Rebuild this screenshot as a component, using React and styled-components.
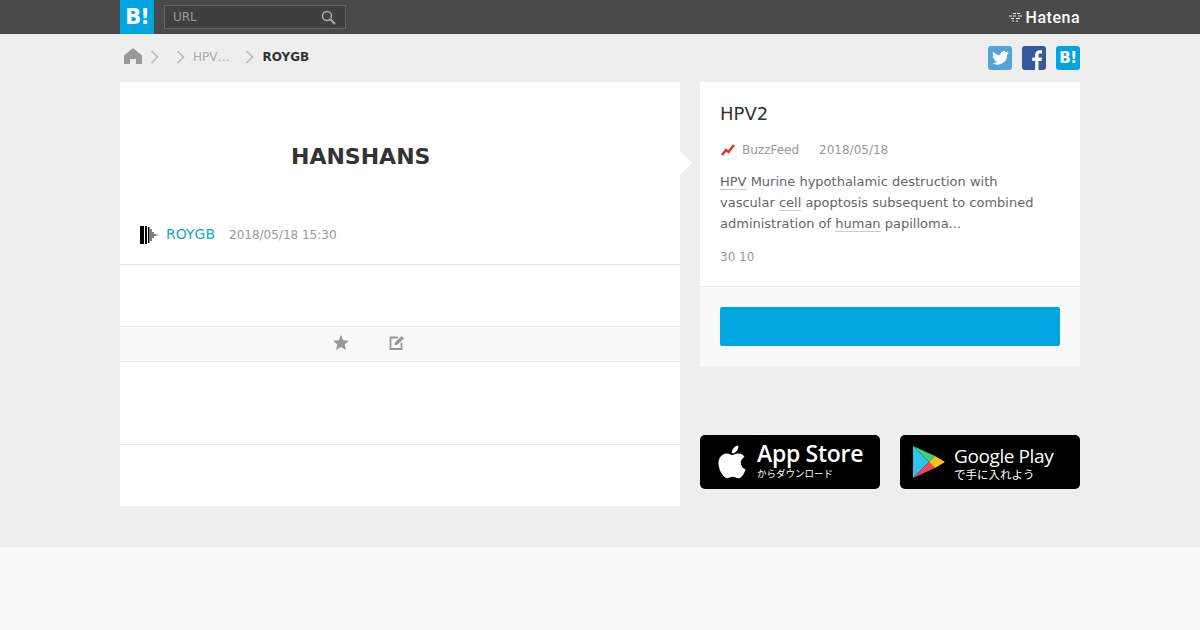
import React from 'react';
import styled, { createGlobalStyle } from 'styled-components';

const Global = createGlobalStyle`
  html, body { margin: 0; padding: 0; }
  body {
    background: #eeeeee;
    font-family: "DejaVu Sans", Verdana, sans-serif;
    color: #333;
    height: 630px;
    overflow: hidden;
  }
`;

const Header = styled.header`
  height: 34px;
  background: #4a4a4a;
`;

const Wrap = styled.div`
  width: 960px;
  margin: 0 auto;
  display: flex;
  align-items: center;
`;

const HeaderInner = styled(Wrap)`
  height: 34px;
`;

const Logo = styled.a`
  width: 34px;
  height: 34px;
  background: #00a4de;
  color: #fff;
  font-size: 21px;
  font-weight: bold;
  letter-spacing: -1px;
  display: flex;
  align-items: center;
  justify-content: center;
`;

const Search = styled.div`
  height: 22px;
  width: 163px;
  margin-left: 10px;
  border: 1px solid #666;
  background: #404040;
  display: flex;
  align-items: center;
  justify-content: space-between;
  padding: 0 9px 0 8px;
  font-size: 12px;
  color: #999;
`;

const Hatena = styled.div`
  margin-left: auto;
  display: flex;
  align-items: center;
  gap: 3px;
  color: #fff;
  font-family: "Roboto", sans-serif;
  font-size: 16px;
  font-weight: 500;
  letter-spacing: 0.5px;
`;

const Crumbs = styled(Wrap)`
  height: 46px;
  margin-bottom: 2px;
  font-size: 12px;
  color: #999;
`;

const Crumb = styled.span`
  display: flex;
  align-items: center;
  font-weight: ${p => (p.$current ? 'bold' : 'normal')};
  color: ${p => (p.$current ? '#333' : '#aaa')};
`;

const HomeIcon = styled.svg`
  margin: 0 0 2px 4px;
`;

const ChevronIcon = styled.svg`
  margin: 0 ${p => p.$mr || 0}px 1px ${p => p.$ml || 0}px;
`;

const Social = styled.div`
  margin-left: auto;
  margin-top: 2px;
  display: flex;
  gap: 10px;
`;

const SocialIcon = styled.a`
  width: 24px;
  height: 24px;
  border-radius: 3px;
  background: ${p => p.$bg};
  color: #fff;
  display: flex;
  align-items: ${p => p.$align || 'center'};
  justify-content: center;
  font-size: 15px;
  font-weight: bold;
  letter-spacing: -0.5px;
  overflow: hidden;
`;

const FacebookF = styled.svg`
  margin-left: 5px;
`;

const Columns = styled.div`
  width: 960px;
  margin: 0 auto;
  display: flex;
  gap: 20px;
  align-items: flex-start;
`;

const Main = styled.main`
  width: 560px;
  height: 424px;
  background: #fff;
  position: relative;
`;

const Pointer = styled.span`
  position: absolute;
  right: -12px;
  top: 69px;
  width: 0;
  height: 0;
  border-style: solid;
  border-width: 12px 0 12px 12px;
  border-color: transparent transparent transparent #fff;
`;

const Title = styled.h1`
  margin: 0;
  padding: 61px 0 0 171px;
  height: 64px;
  font-size: 22px;
  line-height: 28px;
  font-weight: bold;
  color: #333;
`;

const Meta = styled.div`
  height: 56px;
  padding: 0 20px 1px;
  display: flex;
  align-items: center;
  font-size: 12px;
  color: #999;
  border-bottom: 1px solid #e5e5e5;
`;

const UserName = styled.a`
  margin: 0 14px 2px 8px;
  font-size: 14px;
  color: #19a4c4;
`;

const Toolbar = styled.div`
  margin-top: 61px;
  height: 30px;
  padding: 0 0 4px 213px;
  background: #f9f9f9;
  border-top: 1px solid #e8e8e8;
  border-bottom: 1px solid #e8e8e8;
  display: flex;
  align-items: center;
  gap: 40px;
`;

const Divider = styled.div`
  margin-top: 82px;
  border-top: 1px solid #e5e5e5;
`;

const Side = styled.aside`
  width: 380px;
  display: flex;
  flex-direction: column;
`;

const Card = styled.section`
  background: #fff;
`;

const CardBody = styled.div`
  height: 205px;
  padding: 20px 20px 0;
  box-sizing: border-box;
  border-bottom: 1px solid #eeeeee;
`;

const CardTitle = styled.h2`
  margin: 0;
  font-size: 18px;
  line-height: 24px;
  font-weight: normal;
  color: #333;
`;

const Source = styled.div`
  margin-top: 14px;
  display: flex;
  align-items: center;
  font-size: 12px;
  line-height: 20px;
  color: #999;
`;

const SourceName = styled.span`
  margin: 0 20px 0 6px;
`;

const Summary = styled.p`
  margin: 11px 0 0;
  padding-right: 15px;
  font-size: 13px;
  line-height: 21px;
  color: #666;
`;

const Keyword = styled.span`
  border-bottom: 1px solid #ccc;
`;

const Counts = styled.div`
  margin-top: 13px;
  font-size: 12px;
  line-height: 20px;
  color: #999;
`;

const CardFoot = styled.div`
  height: 79px;
  padding: 20px 20px 0;
  box-sizing: border-box;
  background: #f9f9f9;
`;

const BlueButton = styled.a`
  display: block;
  height: 39px;
  border-radius: 2px;
  background: #00a4de;
`;

const Stores = styled.div`
  margin-top: 69px;
  display: flex;
  justify-content: space-between;
`;

const StoreBadge = styled.a`
  width: 180px;
  height: 54px;
  background: #000;
  border-radius: 5px;
  display: flex;
  align-items: center;
  padding-left: ${p => p.$pad}px;
  box-sizing: border-box;
  color: #fff;
`;

const StoreText = styled.div`
  display: flex;
  flex-direction: column;
  margin: ${p => p.$shift}px 0 0 ${p => p.$gap}px;
`;

const StoreName = styled.span`
  font-family: "Open Sans", sans-serif;
  font-size: ${p => p.$size}px;
  line-height: ${p => p.$line}px;
  font-weight: ${p => p.$weight || 400};
  letter-spacing: ${p => p.$track || 0}px;
  white-space: nowrap;
`;

const StoreSub = styled.span`
  font-family: "Noto Sans CJK JP", sans-serif;
  font-size: ${p => p.$size}px;
  line-height: 14px;
  white-space: nowrap;
`;

const Footer = styled.footer`
  margin-top: 41px;
  height: 84px;
  background: #f9f9f9;
`;

const Chevron = ({ ml, mr }) => (
  <ChevronIcon $ml={ml} $mr={mr} width="10" height="14" viewBox="0 0 10 14">
    <path d="M1.5 1l6 6-6 6" fill="none" stroke="#bbb" strokeWidth="1.6" />
  </ChevronIcon>
);

const App = () => (
  <>
    <Global />
    <Header>
      <HeaderInner>
        <Logo>B!</Logo>
        <Search>
          URL
          <svg width="15" height="15" viewBox="0 0 15 15">
            <circle cx="6" cy="6" r="4.5" fill="none" stroke="#aaa" strokeWidth="1.5" />
            <path d="M9.500 9.500l4.500 4.500" stroke="#aaa" strokeWidth="2" />
          </svg>
        </Search>
        <Hatena>
          <svg width="15" height="11" viewBox="0 0 15 11">
            <path d="M5 1.500h3M9 1.500h3M1 4h3M5 4h3M10 4h4M3 6.500h3M8 6.500h4M4 9h2M8 9h2" stroke="#fff" strokeWidth="0.9" fill="none" />
          </svg>
          Hatena
        </Hatena>
      </HeaderInner>
    </Header>
    <Crumbs>
      <HomeIcon width="18" height="16" viewBox="0 0 18 16">
        <path d="M9 0L0 7.500V16h6v-5h6v5h6V7.500z" fill="#999" />
      </HomeIcon>
      <Chevron ml={8} />
      <Chevron ml={16} mr={7} />
      <Crumb>HPV…</Crumb>
      <Chevron ml={16} mr={7} />
      <Crumb $current>ROYGB</Crumb>
      <Social>
        <SocialIcon $bg="#55a4d8">
          <svg width="17" height="14" viewBox="0 0 24 20">
            <path fill="#fff" d="M24 2.400a10 10 0 0 1-2.800.8A5 5 0 0 0 23.300.5a10 10 0 0 1-3.100 1.200 4.900 4.900 0 0 0-8.400 4.500A14 14 0 0 1 1.700.9a4.900 4.900 0 0 0 1.500 6.600 5 5 0 0 1-2.200-.6 4.900 4.900 0 0 0 3.900 4.900 5 5 0 0 1-2.200.1 4.900 4.900 0 0 0 4.600 3.400A9.900 9.900 0 0 1 0 17.300 14 14 0 0 0 21.500 4.900 10 10 0 0 0 24 2.400z" />
          </svg>
        </SocialIcon>
        <SocialIcon $bg="#34589a" $align="flex-end">
          <FacebookF width="12" height="20" viewBox="0 0 12 20">
            <path fill="#fff" d="M7.500 20v-9h3l.5-3.500H7.500V5.300c0-1 .3-1.700 1.700-1.700H11V.5C10.700.4 9.700.3 8.500.3 6 .3 4.200 1.800 4.200 4.800v2.700H1.200V11h3v9z" />
          </FacebookF>
        </SocialIcon>
        <SocialIcon $bg="#00a4de">B!</SocialIcon>
      </Social>
    </Crumbs>
    <Columns>
      <Main>
        <Pointer />
        <Title>HANSHANS</Title>
        <Meta>
          <svg width="18" height="18" viewBox="0 0 18 18">
            <path d="M0 0h4v18H0zM5 0h2v18H5zM8 1h1.500v16H8zM10.500 3h1v12h-1zM12.500 6h1v6h-1zM14.500 8h1v2h-1zM16.500 8.500h1v1h-1z" fill="#000" />
          </svg>
          <UserName>ROYGB</UserName>
          2018/05/18 15:30
        </Meta>
        <Toolbar>
          <svg width="16" height="15" viewBox="0 0 16 15">
            <path d="M8 0l2.300 5.200 5.700.5-4.300 3.700 1.300 5.600L8 12l-5 3 1.300-5.600L0 5.700l5.700-.5z" fill="#999" />
          </svg>
          <svg width="16" height="15" viewBox="0 0 16 15">
            <path d="M9 2.500H1.500v11.500h11V7.500" fill="none" stroke="#999" strokeWidth="1.800" />
            <path d="M5.500 10l.5-2.500L12.500 1 15 3.500 8 10z" fill="#999" />
          </svg>
        </Toolbar>
        <Divider />
      </Main>
      <Side>
        <Card>
          <CardBody>
            <CardTitle>HPV2</CardTitle>
            <Source>
              <svg width="16" height="14" viewBox="0 0 16 14">
                <path d="M2 12l4-5 2.500 2L14 2" fill="none" stroke="#e03a30" strokeWidth="2.600" />
              </svg>
              <SourceName>BuzzFeed</SourceName>
              2018/05/18
            </Source>
            <Summary>
              <Keyword>HPV</Keyword> Murine hypothalamic destruction with vascular <Keyword>cell</Keyword> apoptosis subsequent to combined administration of <Keyword>human</Keyword> papilloma...
            </Summary>
            <Counts>30 10</Counts>
          </CardBody>
          <CardFoot>
            <BlueButton />
          </CardFoot>
        </Card>
        <Stores>
          <StoreBadge $pad={16}>
            <svg width="30" height="36" viewBox="0 0 28 34">
              <path fill="#fff" d="M23.300 18c0-4 3.300-5.900 3.400-6-1.900-2.700-4.700-3-5.700-3.100-2.400-.2-4.700 1.400-5.900 1.400s-3.100-1.400-5.100-1.400C7.300 9 4.800 10.500 3.500 12.800c-2.800 4.700-.7 11.800 2 15.600 1.300 1.900 2.900 4 5 3.900 2-.1 2.800-1.300 5.200-1.300s3.100 1.300 5.200 1.300c2.200 0 3.500-1.900 4.800-3.800 1.500-2.200 2.100-4.300 2.200-4.400-.1-.1-4.500-1.700-4.600-5.900zM19.400 6.500C20.500 5.200 21.200 3.400 21 1.500c-1.500.1-3.500 1-4.600 2.400-1 1.100-1.900 3-1.600 4.800 1.700.1 3.500-.9 4.600-2.200z" />
            </svg>
            <StoreText $gap={11} $shift={-4}>
              <StoreName $size={23} $line={25} $weight={600} $track={-0.3}>App Store</StoreName>
              <StoreSub $size={9.500}>からダウンロード</StoreSub>
            </StoreText>
          </StoreBadge>
          <StoreBadge $pad={13}>
            <svg width="32" height="34" viewBox="0 0 32 34">
              <path fill="#2bc3f2" d="M0 1v32l16-16z" />
              <path fill="#3fd07a" d="M0 1l16 16 6-6z" />
              <path fill="#f0455a" d="M0 33l16-16 6 6z" />
              <path fill="#fcc419" d="M22 11l10 6-10 6-6-6z" />
            </svg>
            <StoreText $gap={9} $shift={2}>
              <StoreName $size={19} $line={21} $track={-0.4}>Google Play</StoreName>
              <StoreSub $size={11.500}>で手に入れよう</StoreSub>
            </StoreText>
          </StoreBadge>
        </Stores>
      </Side>
    </Columns>
    <Footer />
  </>
);

export default App;
